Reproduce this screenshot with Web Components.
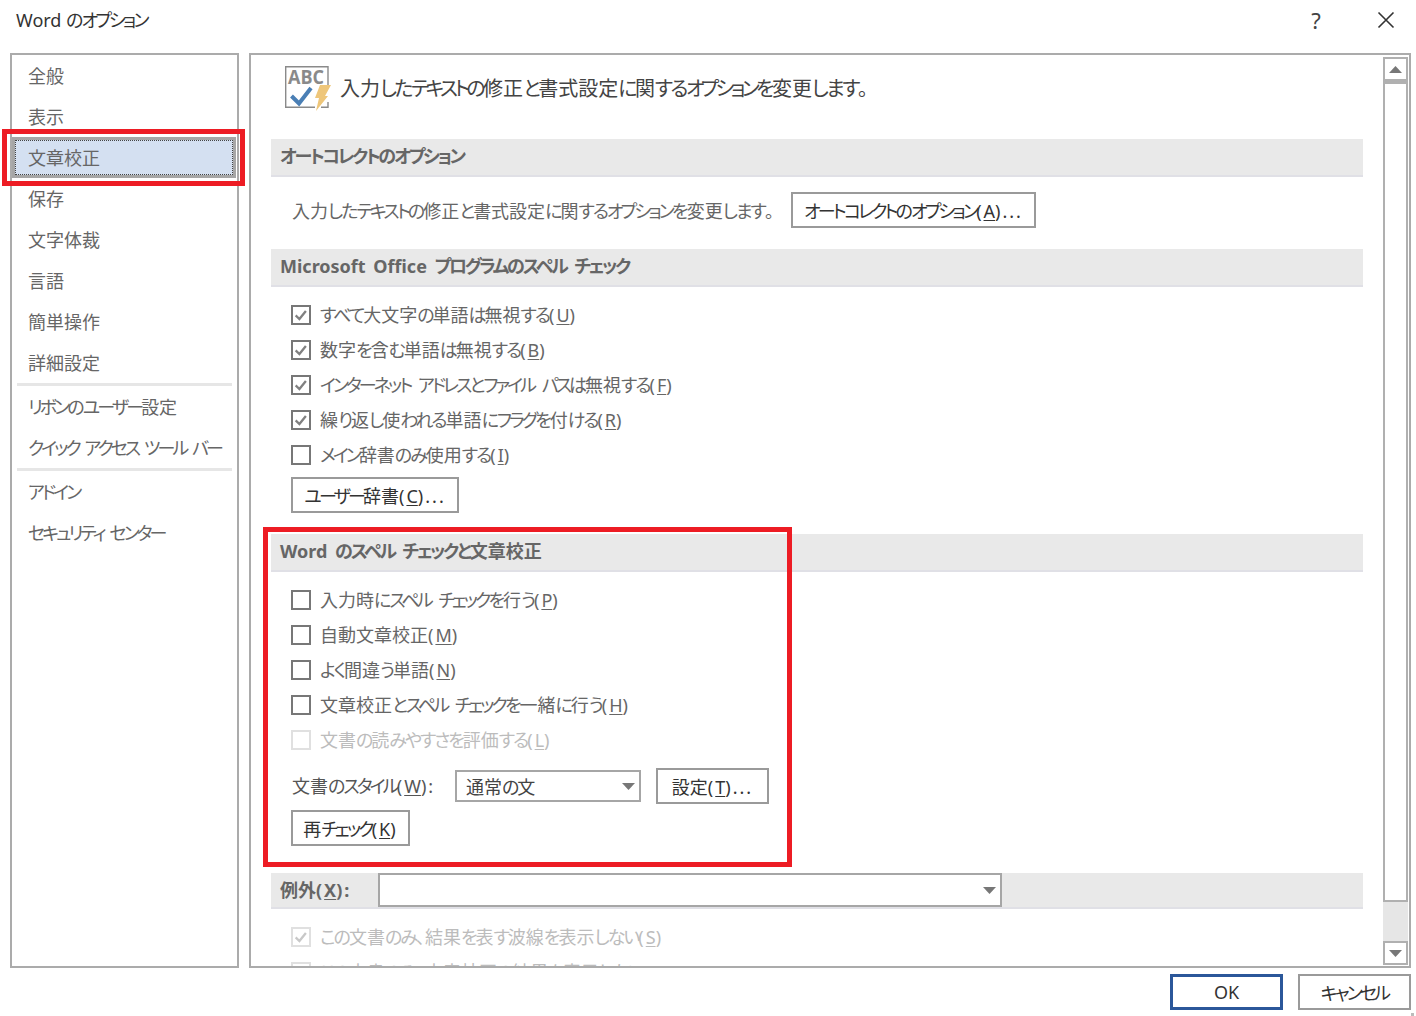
<!DOCTYPE html>
<html lang="ja">
<head>
<meta charset="utf-8">
<title>Word のオプション</title>
<style>
    html, body { margin: 0; padding: 0; background: #fff; }
    body {
        font-family: "Noto Sans", "Noto Sans CJK JP", sans-serif;
        font-size: 18px;
        font-feature-settings: "palt";
        color: #555;
    }
    u { text-underline-offset: 2px; }
</style>
</head>
<body>
<word-options>
    <nav-list slot="nav">
        <nav-item>全般</nav-item>
        <nav-item>表示</nav-item>
        <nav-item selected>文章校正</nav-item>
        <nav-item>保存</nav-item>
        <nav-item>文字体裁</nav-item>
        <nav-item>言語</nav-item>
        <nav-item>簡単操作</nav-item>
        <nav-item>詳細設定</nav-item>
        <nav-sep></nav-sep>
        <nav-item>リボンのユーザー設定</nav-item>
        <nav-item>クイック アクセス ツール バー</nav-item>
        <nav-sep></nav-sep>
        <nav-item>アドイン</nav-item>
        <nav-item>セキュリティ センター</nav-item>
    </nav-list>

    <proof-icon slot="icon"></proof-icon>
    <span slot="intro">入力したテキストの修正と書式設定に関するオプションを変更します。</span>

    <section-head style="margin-top:17px">オートコレクトのオプション</section-head>
    <opt-row style="height:72px;padding:0 0 6px 21px">
        <span style="width:499px;flex:none;color:#666">入力したテキストの修正と書式設定に関するオプションを変更します。</span>
        <win-button width="245">オートコレクトのオプション(<u>A</u>)...</win-button>
    </opt-row>

    <section-head>Microsoft Office プログラムのスペル チェック</section-head>
    <check-group style="padding-top:10px">
        <check-row checked>すべて大文字の単語は無視する(<u>U</u>)</check-row>
        <check-row checked>数字を含む単語は無視する(<u>B</u>)</check-row>
        <check-row checked>インターネット アドレスとファイル パスは無視する(<u>F</u>)</check-row>
        <check-row checked>繰り返し使われる単語にフラグを付ける(<u>R</u>)</check-row>
        <check-row>メイン辞書のみ使用する(<u>I</u>)</check-row>
    </check-group>
    <opt-row style="height:62px;padding:5px 0 0 20px;align-items:flex-start">
        <win-button width="168">ユーザー辞書(<u>C</u>)...</win-button>
    </opt-row>

    <section-head>Word のスペル チェックと文章校正</section-head>
    <check-group style="padding-top:10px">
        <check-row>入力時にスペル チェックを行う(<u>P</u>)</check-row>
        <check-row>自動文章校正(<u>M</u>)</check-row>
        <check-row>よく間違う単語(<u>N</u>)</check-row>
        <check-row>文章校正とスペル チェックを一緒に行う(<u>H</u>)</check-row>
        <check-row disabled>文書の読みやすさを評価する(<u>L</u>)</check-row>
    </check-group>
    <opt-row style="height:47px;padding:11px 0 0 21px">
        <span style="width:163px;flex:none;margin-top:-2px">文書のスタイル(<u>W</u>):</span>
        <combo-box width="186" height="32">通常の文</combo-box>
        <win-button width="113" style="margin-left:15px">設定(<u>T</u>)...</win-button>
    </opt-row>
    <opt-row style="height:42px;padding:6px 0 0 20px">
        <win-button width="119">再チェック(<u>K</u>)</win-button>
    </opt-row>

    <section-head style="margin-top:27px" compact>
        <span style="width:98px;flex:none">例外(<u>X</u>):</span>
        <combo-box width="624" height="34"></combo-box>
    </section-head>
    <check-group style="padding-top:10px">
        <check-row disabled checked>この文書のみ、結果を表す波線を表示しない(<u>S</u>)</check-row>
        <check-row disabled>この文書のみ、文章校正の結果を表示しない(<u>D</u>)</check-row>
    </check-group>
</word-options>

<script>
function shadow(el, html) {
    el.attachShadow({ mode: 'open' });
    el.shadowRoot.innerHTML = html;
}

// The reference font has narrow kana and wide punctuation, so adjust those runs
function tighten(root) {
    var walker = document.createTreeWalker(root, NodeFilter.SHOW_TEXT);
    var nodes = [];
    while (walker.nextNode()) {
        var tag = walker.currentNode.parentNode.nodeName;
        if (tag != 'SCRIPT' && tag != 'STYLE' && walker.currentNode.nodeValue.trim()) {
            nodes.push(walker.currentNode);
        }
    }
    nodes.forEach(function (node) {
        var frag = document.createDocumentFragment();
        node.nodeValue.split(/([\u3041-\u309f]+|[\u30a0-\u30ff]+|[():]|\.+)/).forEach(function (part) {
            if (!part) return;
            var spacing = null;
            if (/^[\u3041-\u309f]/.test(part)) spacing = 'var(--hira, -2px)';
            else if (/^[\u30a0-\u30ff]/.test(part)) spacing = 'var(--kata, -2.8px)';
            else if (/^[():]/.test(part)) spacing = '2px';
            else if (part[0] == '.') spacing = '2px';
            if (spacing) {
                var span = document.createElement('span');
                span.style.letterSpacing = spacing;
                span.textContent = part;
                frag.appendChild(span);
            } else {
                frag.appendChild(document.createTextNode(part));
            }
        });
        node.parentNode.replaceChild(frag, node);
    });
}

class WordOptions extends HTMLElement {
    connectedCallback() {
        shadow(this, `
            <style>
                :host { display: block; position: relative; width: 1416px; height: 1016px; overflow: hidden; }
                .title { display: flex; align-items: flex-start; height: 53px; padding-left: 16px; }
                .title .name { color: #333; line-height: 40px; flex: 1; }
                .help { width: 80px; text-align: center; line-height: 40px; font-size: 22px; color: #444; }
                .close { width: 60px; height: 40px; display: flex; justify-content: center; align-items: center; }
                .body { display: flex; gap: 10px; padding-left: 10px; height: 915px; }
                .left { width: 229px; box-sizing: border-box; border: 2px solid #ababab; }
                .main { width: 1162px; box-sizing: border-box; border: 2px solid #ababab; display: flex; overflow: hidden; }
                .scroll { flex: 1; overflow: hidden; padding: 0 20px; min-width: 0; }
                .intro { display: flex; align-items: flex-start; height: 56px; padding: 11px 0 0 14px; }
                .intro-text { font-size: 20px; line-height: 46px; margin-left: 7px; color: #444; white-space: nowrap; --kata: -3.6px; --hira: -2.5px; }
                .foot { display: flex; justify-content: flex-end; gap: 15px; padding: 6px 5px 0 0; }
                .mark { position: absolute; box-sizing: border-box; border: 5px solid #ed1c24; pointer-events: none; }
                .grip { position: absolute; right: 2px; bottom: 0; width: 3px; height: 3px; background: #bbb; }
            </style>
            <div class="title">
                <div class="name">Word のオプション</div>
                <div class="help">?</div>
                <div class="close">
                    <svg width="18" height="18" viewBox="0 0 18 18"><path d="M1.5 1.5 16.5 16.5M16.5 1.5 1.5 16.5" stroke="#333" stroke-width="1.6" fill="none"/></svg>
                </div>
            </div>
            <div class="body">
                <div class="left"><slot name="nav"></slot></div>
                <div class="main">
                    <div class="scroll">
                        <div class="intro"><slot name="icon"></slot><div class="intro-text"><slot name="intro"></slot></div></div>
                        <slot></slot>
                    </div>
                    <v-scrollbar></v-scrollbar>
                </div>
            </div>
            <div class="foot">
                <win-button width="113" primary>OK</win-button>
                <win-button width="113">キャンセル</win-button>
            </div>
            <div class="mark" style="left:2px;top:129px;width:243px;height:57px"></div>
            <div class="mark" style="left:263px;top:527px;width:529px;height:340px"></div>
            <div class="grip"></div>
        `);
    }
}

class NavList extends HTMLElement {
    connectedCallback() {
        shadow(this, `<style>:host { display: block; }</style><slot></slot>`);
    }
}

class NavItem extends HTMLElement {
    connectedCallback() {
        shadow(this, `
            <style>
                :host { display: block; height: 41px; box-sizing: border-box; padding-left: 16px; line-height: 43px; color: #666; white-space: nowrap; --kata: -2.9px; word-spacing: 1px; }
                :host([selected]) { background: #d4e0f1; margin-right: 1px; border: 3px solid #a6a6a6; outline: 1px dotted #444; outline-offset: -4px; padding-left: 13px; line-height: 37px; }
            </style>
            <slot></slot>
        `);
    }
}

class NavSep extends HTMLElement {
    connectedCallback() {
        shadow(this, `<style>:host { display: block; height: 3px; margin: 0 5px; background: #e6e6e6; }</style>`);
    }
}

class ProofIcon extends HTMLElement {
    connectedCallback() {
        shadow(this, `
            <style>
                :host { display: block; width: 48px; height: 46px; flex: none; }
                svg { overflow: visible; }
                text { font: 700 20px "Open Sans", sans-serif; fill: #8a8a8a; }
            </style>
            <svg width="48" height="46" viewBox="0 0 48 46">
                <path d="M43 19V.7H.7V41.3H30" fill="none" stroke="#8a8a8a" stroke-width="1.4"/>
                <path d="M43 36V41.3H36" fill="none" stroke="#8a8a8a" stroke-width="1.4"/>
                <text x="3" y="17.5" textLength="36" lengthAdjust="spacingAndGlyphs">ABC</text>
                <path d="M6.5 30 14 37.5 26 22" fill="none" stroke="#4a7fb5" stroke-width="4"/>
                <path d="M35 19H46L40 30H43L31 45 34 32H30Z" fill="#eec67a"/>
            </svg>
        `);
    }
}

class SectionHead extends HTMLElement {
    connectedCallback() {
        shadow(this, `
            <style>
                :host { display: block; box-sizing: border-box; height: 38px; padding-left: 9px; background: #e9e9e9; border-bottom: 2px solid #e0e0e6; font-weight: 700; color: #666; white-space: nowrap; line-height: 34px; word-spacing: 3px; --kata: -2.4px; }
                :host([compact]) { height: 36px; line-height: 35px; }
                :host([compact]) .in { display: flex; }
            </style>
            <div class="in"><slot></slot></div>
        `);
    }
}

class OptRow extends HTMLElement {
    connectedCallback() {
        shadow(this, `<style>:host { display: flex; align-items: center; box-sizing: border-box; white-space: nowrap; }</style><slot></slot>`);
    }
}

class CheckGroup extends HTMLElement {
    connectedCallback() {
        shadow(this, `<style>:host { display: block; }</style><slot></slot>`);
    }
}

class CheckRow extends HTMLElement {
    connectedCallback() {
        var tick = this.hasAttribute('checked')
            ? '<path d="M3 9.5 7.2 13.5 14.5 4.5" fill="none" stroke="currentColor" stroke-width="2.6"/>'
            : '';
        shadow(this, `
            <style>
                :host { display: flex; align-items: center; height: 35px; padding-left: 20px; color: #666; white-space: nowrap; word-spacing: 3px; --kata: -2.9px; }
                .box { width: 20px; height: 20px; box-sizing: border-box; border: 2px solid #777; background: #fff; color: #808080; flex: none; margin-right: 9px; }
                .label { margin-top: -2px; }
                svg { display: block; }
                :host([disabled]) { color: #bcbcbc; }
                :host([disabled]) .box { border-color: #e0e0e0; color: #c8c8c8; }
            </style>
            <div class="box"><svg width="16" height="16" viewBox="0 0 18 18">${tick}</svg></div>
            <span class="label"><slot></slot></span>
        `);
    }
}

class WinButton extends HTMLElement {
    connectedCallback() {
        var w = this.getAttribute('width') || 113;
        shadow(this, `
            <style>
                :host { display: flex; justify-content: center; align-items: center; box-sizing: border-box; width: ${w}px; height: 36px; flex: none; border: 2px solid #9a9a9a; color: #333; background: #fff; white-space: nowrap; padding-bottom: 1px; }
                :host([primary]) { border: 3px solid #2b579a; }
            </style>
            <span><slot></slot></span>
        `);
    }
}

class ComboBox extends HTMLElement {
    connectedCallback() {
        var w = this.getAttribute('width');
        var h = this.getAttribute('height');
        shadow(this, `
            <style>
                :host { display: flex; align-items: center; box-sizing: border-box; width: ${w}px; height: ${h}px; flex: none; border: 2px solid #a6a6a6; background: #fff; padding: 0 9px; color: #444; font-weight: 400; }
                .text { flex: 1; }
                svg { display: block; margin-right: -5px; }
            </style>
            <div class="text"><slot></slot></div>
            <svg width="13" height="7" viewBox="0 0 13 7"><path d="M0 0H13L6.5 7Z" fill="#777"/></svg>
        `);
    }
}

class VScrollbar extends HTMLElement {
    connectedCallback() {
        shadow(this, `
            <style>
                :host { display: flex; flex-direction: column; width: 25px; flex: none; margin: 2px 1px 1px 0; background: #e6e6e6; }
                .btn, .thumb { box-sizing: border-box; border: 2px solid #b0b0b0; background: #fff; }
                .btn { height: 24px; display: flex; align-items: center; justify-content: center; }
                .thumb { height: 821px; border-top-width: 3px; }
                .gap { flex: 1; }
            </style>
            <div class="btn"><svg width="13" height="7" viewBox="0 0 13 7"><path d="M0 7H13L6.5 0Z" fill="#777"/></svg></div>
            <div class="thumb"></div>
            <div class="gap"></div>
            <div class="btn"><svg width="13" height="7" viewBox="0 0 13 7"><path d="M0 0H13L6.5 7Z" fill="#777"/></svg></div>
        `);
    }
}

customElements.define('word-options', WordOptions);
customElements.define('nav-list', NavList);
customElements.define('nav-item', NavItem);
customElements.define('nav-sep', NavSep);
customElements.define('proof-icon', ProofIcon);
customElements.define('section-head', SectionHead);
customElements.define('opt-row', OptRow);
customElements.define('check-group', CheckGroup);
customElements.define('check-row', CheckRow);
customElements.define('win-button', WinButton);
customElements.define('combo-box', ComboBox);
customElements.define('v-scrollbar', VScrollbar);

tighten(document.body);
tighten(document.querySelector('word-options').shadowRoot);
</script>
</body>
</html>
